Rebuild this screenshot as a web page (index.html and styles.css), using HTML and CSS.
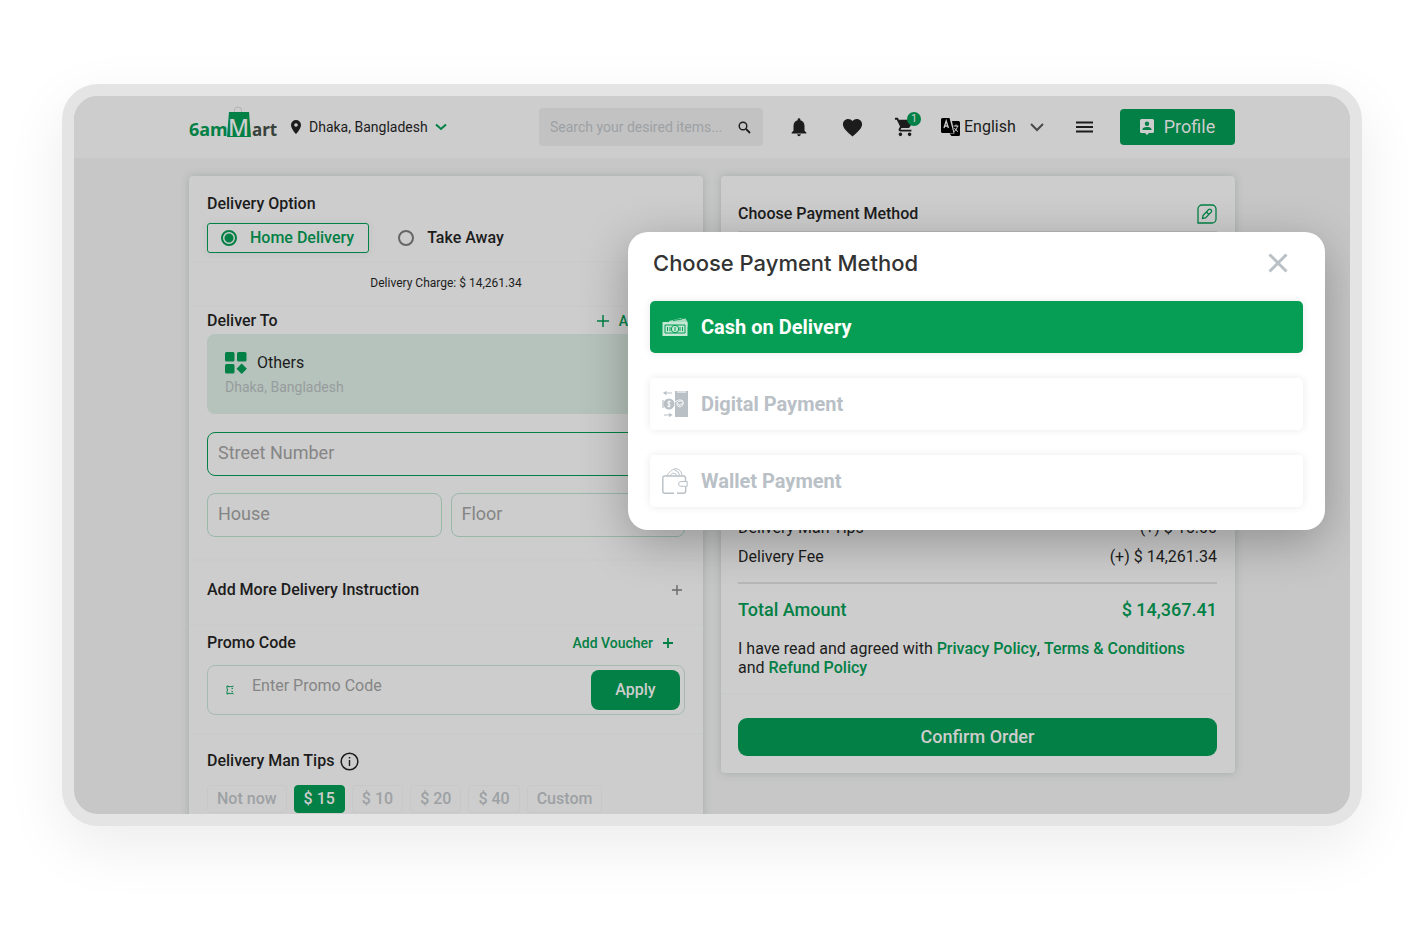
FILE: index.html
```html
<!DOCTYPE html>
<html lang="en">
<head>
<meta charset="utf-8">
<title>6amMart Checkout</title>
<link rel="stylesheet" href="styles.css">
</head>
<body>
<div class="frame">
  <header class="topbar">
    <div class="container topbar-row">
      <div class="brand">
        <svg class="logo" width="90" height="42" viewBox="0 0 90 42" role="img" aria-label="6amMart">
          <path d="M45.500 8V4.500a3.500 3.500 0 0 1 7 0V8" fill="none" stroke="#b0b0b0" stroke-width="1"/>
          <path d="M40 6h20l2 25H38z" fill="#028045"/>
          <text class="logo-green" x="0" y="30">6am</text>
          <text class="logo-m" x="39" y="30">M</text>
          <text class="logo-dark" x="63" y="30">art</text>
        </svg>
        <button class="location" type="button">
          <svg width="12" height="16" viewBox="0 0 12 16"><path d="M6 1a5 5 0 0 0-5 5c0 3.800 5 9 5 9s5-5.200 5-9a5 5 0 0 0-5-5zm0 6.800a1.800 1.800 0 1 1 0-3.600 1.800 1.800 0 0 1 0 3.600z" fill="#1c1c1c"/></svg>
          <span>Dhaka, Bangladesh</span>
          <svg width="12" height="8" viewBox="0 0 12 8"><path d="M1 1.500l5 4.500 5-4.500" fill="none" stroke="#028045" stroke-width="2"/></svg>
        </button>
      </div>
      <div class="search">
        <input type="search" aria-label="Search items" placeholder="Search your desired items...">
        <svg width="13" height="13" viewBox="0 0 13 13"><circle cx="5" cy="5" r="3.800" fill="none" stroke="#1c1c1c" stroke-width="1.400"/><path d="M8 8l4 4" stroke="#1c1c1c" stroke-width="1.800"/></svg>
      </div>
      <nav class="shortcuts">
        <button class="icon-btn" type="button" aria-label="Notifications"><svg width="22" height="22" viewBox="0 0 24 24"><path d="M12 22c1.100 0 2-.9 2-2h-4c0 1.100.9 2 2 2zm6-6v-5c0-3.070-1.630-5.640-4.500-6.320V4a1.500 1.500 0 0 0-3 0v.68C7.640 5.360 6 7.920 6 11v5l-2 2v1h16v-1l-2-2z" fill="#1c1c1c"/></svg></button>
        <button class="icon-btn" type="button" aria-label="Wishlist"><svg width="23" height="23" viewBox="0 0 24 24"><path d="M12 21.350l-1.450-1.320C5.400 15.360 2 12.280 2 8.500 2 5.420 4.420 3 7.500 3c1.740 0 3.410.81 4.500 2.090C13.090 3.810 14.760 3 16.500 3 19.580 3 22 5.420 22 8.500c0 3.780-3.400 6.860-8.550 11.540L12 21.350z" fill="#1c1c1c"/></svg></button>
        <button class="icon-btn" type="button" aria-label="Cart"><svg width="22" height="22" viewBox="0 0 24 24"><path d="M7 18a2 2 0 1 0 0 4 2 2 0 0 0 0-4zM1 2v2h2l3.600 7.590-1.350 2.450C4.520 15.370 5.480 17 7 17h12v-2H7.420a.25.25 0 0 1-.25-.25l.03-.12.9-1.630h7.450c.75 0 1.410-.41 1.750-1.030L21.700 4H5.210L4.270 2H1zm16 16a2 2 0 1 0 0 4 2 2 0 0 0 0-4z" fill="#1c1c1c"/></svg><span class="badge">1</span></button>
      </nav>
      <label class="language">
        <svg width="19" height="18" viewBox="0 0 19 18"><path d="M1.500 0h7l4 15H1.500A1.500 1.500 0 0 1 0 13.500v-12A1.500 1.500 0 0 1 1.500 0z" fill="#000"/><path d="M11 3h6.500A1.500 1.500 0 0 1 19 4.500v12a1.500 1.500 0 0 1-1.500 1.500h-7l-2-2.500h5z" fill="#000"/><path d="M3 10l2.200-7 2.200 7M3.800 8h2.900" fill="none" stroke="#cdcdcd" stroke-width="1.300"/><path d="M12.500 8h5M15 6.500V8m-2 5.500c2-1 3-3 3.500-5.500M13.500 10c.8 1.500 2 3 3.500 3.500" fill="none" stroke="#cdcdcd"/></svg>
        <select aria-label="Language"><option>English</option></select>
        <svg width="14" height="9" viewBox="0 0 14 9"><path d="M1 1l6 6 6-6" fill="none" stroke="#4a4a4a" stroke-width="2"/></svg>
      </label>
      <button class="icon-btn" type="button" aria-label="Menu"><svg width="17" height="12" viewBox="0 0 17 12"><path d="M0 1.500h17M0 6h17M0 10.500h17" stroke="#1c1c1c" stroke-width="1.800"/></svg></button>
      <button class="profile" type="button">
        <svg width="14" height="16" viewBox="0 0 14 16"><path fill-rule="evenodd" d="M1.500 0h11A1.500 1.500 0 0 1 14 1.500v11a1.500 1.500 0 0 1-1.500 1.500H9l-2 2-2-2H1.500A1.500 1.500 0 0 1 0 12.500v-11A1.500 1.500 0 0 1 1.500 0zM7 2.500a2.200 2.200 0 1 0 0 4.400 2.200 2.200 0 0 0 0-4.400zM2.500 11h9v-.8C11.500 8.700 8.500 8 7 8s-4.500.7-4.500 2.200z" fill="#cdcdcd"/></svg>
        Profile
      </button>
    </div>
  </header>

  <main class="container columns">
    <form class="card">
      <section class="section section-option">
        <h2>Delivery Option</h2>
        <div class="choices">
          <label class="choice choice-on"><input type="radio" name="mode" checked> Home Delivery</label>
          <label class="choice"><input type="radio" name="mode"> Take Away</label>
        </div>
      </section>
      <section class="section section-charge">Delivery Charge: $ 14,261.34</section>
      <section class="section section-address">
        <div class="row">
          <h2>Deliver To</h2>
          <button class="link-btn add-address" type="button"><svg width="12" height="12" viewBox="0 0 12 12"><path d="M0 6h12M6 0v12" stroke="#028045" stroke-width="1.500"/></svg>Add New</button>
        </div>
        <div class="address">
          <div class="address-name">
            <svg width="22" height="22" viewBox="0 0 22 22" fill="#028045"><rect width="9.500" height="9.500" rx="1.500"/><rect x="12" width="9.500" height="9.500" rx="1.500"/><rect y="12" width="9.500" height="9.500" rx="1.500"/><path d="M16.700 11.500l5.200 5.200-5.200 5.200-5.200-5.200z"/></svg>
            Others
          </div>
          <div class="address-line">Dhaka, Bangladesh</div>
        </div>
        <input class="field field-active" type="text" aria-label="Street Number" placeholder="Street Number">
        <div class="field-pair">
          <input class="field" type="text" aria-label="House" placeholder="House">
          <input class="field" type="text" aria-label="Floor" placeholder="Floor">
        </div>
      </section>
      <section class="section section-note row">
        <h2>Add More Delivery Instruction</h2>
        <button class="link-btn" type="button" aria-label="Add instruction"><svg width="10" height="10" viewBox="0 0 10 10"><path d="M0 5h10M5 0v10" stroke="#6a6a6a" stroke-width="1.400"/></svg></button>
      </section>
      <section class="section section-promo">
        <div class="row">
          <h2>Promo Code</h2>
          <button class="link-btn voucher" type="button">Add Voucher<svg width="10" height="10" viewBox="0 0 10 10"><path d="M0 5h10M5 0v10" stroke="#028045" stroke-width="1.800"/></svg></button>
        </div>
        <div class="promo">
          <svg width="8" height="10" viewBox="0 0 8 10"><path d="M7.500 1L6 1.800 4.500 1.500 3 1.800 1 .8v2.700l.6 1.500L1 6.500v2.700l2-1 1.500.5L6 8.200l1.500.8M7 3.200l-1.500.6M5.500 6.300l1.500.6" fill="none" stroke="#028045"/></svg>
          <input type="text" aria-label="Promo code" placeholder="Enter Promo Code">
          <button type="button">Apply</button>
        </div>
      </section>
      <section class="section section-tips">
        <h2>Delivery Man Tips <svg width="19" height="19" viewBox="0 0 19 19"><circle cx="9.500" cy="9.500" r="8.300" fill="none" stroke="#1c1c1c" stroke-width="1.500"/><path d="M9.500 8v6M9.500 5v1.500" stroke="#1c1c1c" stroke-width="1.400"/></svg></h2>
        <div class="chips">
          <button type="button">Not now</button>
          <button type="button" class="chip-on">$ 15</button>
          <button type="button">$ 10</button>
          <button type="button">$ 20</button>
          <button type="button">$ 40</button>
          <button type="button">Custom</button>
        </div>
      </section>
    </form>

    <section class="card summary">
      <div class="summary-body">
        <div class="row summary-head">
          <h2>Choose Payment Method</h2>
          <button class="link-btn" type="button" aria-label="Edit payment method"><svg width="20" height="20" viewBox="0 0 20 20" fill="none" stroke="#028045" stroke-width="1.300"><path d="M1 19V5a4 4 0 0 1 4-4h10a4 4 0 0 1 4 4v10a4 4 0 0 1-4 4z"/><path d="M5.500 14.500l.5-3 5.700-6c1.500-1.200 3.700.8 2.700 2.400l-5.900 6zM9.500 8l2.500 2.700"/></svg></button>
        </div>
        <dl class="costs">
          <div class="row"><dt>Delivery Man Tips</dt><dd>(+) $ 15.00</dd></div>
          <div class="row"><dt>Delivery Fee</dt><dd>(+) $ 14,261.34</dd></div>
        </dl>
        <div class="row total"><span>Total Amount</span><span>$ 14,367.41</span></div>
        <p class="terms">I have read and agreed with <a href="#">Privacy Policy</a>, <a href="#">Terms &amp; Conditions</a> and <a href="#">Refund Policy</a></p>
      </div>
      <div class="summary-foot"><button class="confirm" type="button">Confirm Order</button></div>
    </section>
  </main>

  <div class="modal" role="dialog" aria-labelledby="modal-title">
    <div class="modal-head">
      <h1 id="modal-title">Choose Payment Method</h1>
      <button class="close" type="button" aria-label="Close"><svg width="20" height="20" viewBox="0 0 20 20"><path d="M1.500 1.500l17 17M18.500 1.500l-17 17" stroke="#b9c0c6" stroke-width="3"/></svg></button>
    </div>
    <div class="methods">
      <label class="method method-on">
        <input type="radio" name="method" checked>
        <svg width="26" height="26" viewBox="0 0 26 26"><path d="M7 7l12-3 1.500 1 3-.5 2 3.500v5H7z" fill="#a8dcc0"/><rect x=".5" y="8" width="25" height="14" fill="#c4e8d4"/><g fill="none" stroke="#059e54" stroke-width="1"><path d="M3 11h20v8H3zM11 6.500l9-1.500"/><circle cx="13" cy="15" r="3.700"/><path d="M5.500 13v4M8 13v4M18 13v4M20.500 13v4M13 13v4"/></g></svg>
        Cash on Delivery
      </label>
      <label class="method">
        <input type="radio" name="method">
        <svg width="26" height="26" viewBox="0 0 26 26"><path d="M13 0h13v26H13z" fill="#b9c0c6"/><path d="M15 1h9" stroke="#fff"/><circle cx="7" cy="13" r="5.500" fill="#b9c0c6"/><path d="M1 9v8M2 2h8M4.500.5L2 2l2.500 1.500M2 24h7M7 22.500L9.500 24 7 25.500" fill="none" stroke="#b9c0c6" stroke-width="1.200"/><path d="M8.800 10.800c-3-1.400-4.200 1.500-1.800 2.200s1.200 3.400-1.800 2.200M7 9.500v7M13 11c5-4 9-1.500 8 2s-6 4-6 0 5-2 6-4M16 13l2 1.500 3-3" fill="none" stroke="#fff"/></svg>
        Digital Payment
      </label>
      <label class="method">
        <input type="radio" name="method">
        <svg width="26" height="26" viewBox="0 0 26 26" fill="none" stroke="#b9c0c6" stroke-width="1.400"><path d="M23.500 13V10a2 2 0 0 0-2-2h-19A1.800 1.800 0 0 0 .8 10v13a2.200 2.200 0 0 0 2.200 2.200h9M15 25.200h6.500a2.200 2.200 0 0 0 2.200-2.200v-4.500"/><path d="M19 13.500h6.200v4.800H19a2.400 2.400 0 0 1 0-4.800zM5 7.500C8 3 11 .8 14 .8c3.500 0 5.500 3 6 6.500M8.500 7.500c1-2.500 4-3.500 6.500-.2M12 1.500l4 2.500 2 3.500" stroke-width="1"/></svg>
        Wallet Payment
      </label>
    </div>
  </div>
</div>
</body>
</html>
```
FILE: styles.css
```css
:root {
  --green: #028045;
  --ink: #1c1c1c;
  --surface: #cdcdcd;
  --page: #c7c7c7;
  --muted: #9da1a4;
}

* { box-sizing: border-box; }

body {
  margin: 0;
  padding: 84px 46px 126px 62px;
  min-height: 100vh;
  background: #fff;
  color: var(--ink);
  font: 16px/20px Roboto, sans-serif;
}

button, input, select { font: inherit; color: inherit; }
button { border: 0; padding: 0; background: none; }
svg { display: block; flex: none; }
h1, h2, p, dl, dd { margin: 0; }
h2 { font-size: 16px; line-height: 20px; font-weight: 500; }

.frame {
  position: relative;
  height: calc(100vh - 210px);
  border: 12px solid #e4e4e4;
  border-radius: 36px;
  background: var(--page);
  box-shadow: 0 20px 60px rgba(0, 0, 0, 0.08);
  overflow: hidden;
}

.container { width: 100%; max-width: 1046px; margin: 0 auto; }
.row { display: flex; align-items: center; justify-content: space-between; }

.topbar { background: var(--surface); }
.topbar-row { display: flex; align-items: center; gap: 24px; height: 62px; }
.brand { display: flex; align-items: center; flex: 1; gap: 11px; margin-right: -24px; }
.logo { font: 700 18px "Noto Sans", sans-serif; }
.logo-green { fill: var(--green); }
.logo-m { fill: var(--surface); font-size: 23px; font-weight: 500; }
.logo-dark { fill: #38423a; font-size: 17px; }
.location { display: flex; align-items: center; gap: 7px; font-size: 14px; }

.search {
  display: flex;
  align-items: center;
  width: 224px;
  height: 38px;
  padding: 0 12px 0 11px;
  border-radius: 4px;
  background: #c2c2c2;
}
.search input {
  flex: 1;
  min-width: 0;
  padding: 0;
  border: 0;
  background: none;
  font-size: 14px;
}
.search input::placeholder { color: var(--muted); opacity: 1; }

.shortcuts { display: flex; gap: 29px; }
.icon-btn {
  position: relative;
  display: flex;
  align-items: center;
  justify-content: center;
  width: 24px;
  height: 24px;
}
.badge {
  position: absolute;
  top: -3px;
  right: -4px;
  width: 14px;
  height: 14px;
  border-radius: 7px;
  background: var(--green);
  color: var(--surface);
  font-size: 11px;
  line-height: 14px;
}
.language { display: flex; align-items: center; gap: 4px; width: 107px; }
.language select {
  width: 62px;
  padding: 0;
  border: 0;
  background: none;
  appearance: none;
}
.profile {
  display: flex;
  align-items: center;
  justify-content: center;
  gap: 10px;
  width: 115px;
  height: 36px;
  border-radius: 4px;
  background: var(--green);
  color: var(--surface);
  font-size: 18px;
}

.columns {
  display: grid;
  grid-template-columns: 1fr 1fr;
  align-items: start;
  gap: 18px;
  padding-top: 18px;
}
.card {
  border-radius: 4px;
  background: var(--surface);
  box-shadow: 0 0 8px rgba(60, 90, 80, 0.25);
}
.section { padding: 0 18px; border-bottom: 2px solid #cacbcb; }
.section-option { padding-top: 18px; padding-bottom: 8px; }
.choices { display: flex; gap: 16px; margin-top: 9px; }
.choice {
  display: flex;
  align-items: center;
  gap: 13px;
  height: 30px;
  padding: 0 12px;
  border: 1px solid transparent;
  border-radius: 3px;
  font-weight: 500;
}
.choice-on {
  border-color: var(--green);
  color: var(--green);
  padding: 0 14px 0 13px;
  box-shadow: 0 0 8px rgba(0, 80, 50, 0.08);
}
.choice input {
  appearance: none;
  width: 16px;
  height: 16px;
  margin: 0;
  border: 2px solid #666;
  border-radius: 50%;
}
.choice input:checked {
  border-color: var(--green);
  background: radial-gradient(circle, var(--green) 4px, transparent 5px);
}
.section-charge {
  padding-top: 10px;
  padding-bottom: 12px;
  font-size: 12px;
  text-align: center;
}
.section-address { padding-top: 4px; padding-bottom: 22px; }
.link-btn { display: flex; align-items: center; gap: 10px; }
.add-address, .voucher { color: var(--green); font-size: 14px; font-weight: 500; }
.add-address { padding-right: 10px; }
.voucher { padding-right: 12px; }
.address {
  height: 80px;
  margin-top: 3px;
  padding: 18px;
  border-radius: 8px;
  background: #b6c3bc;
}
.address-name { display: flex; align-items: center; gap: 10px; }
.address-line { margin-top: 3px; color: #969c9c; font-size: 14px; line-height: 20px; }
.field {
  width: 100%;
  height: 44px;
  margin-top: 17px;
  padding: 0 10px 4px;
  border: 1px solid #98b8a8;
  border-radius: 8px;
  background: none;
  font-size: 18px;
}
.field::placeholder, .promo input::placeholder { color: #858585; opacity: 1; }
.field-active { margin-top: 18px; border-color: var(--green); }
.field-pair { display: grid; grid-template-columns: 1fr 1fr; gap: 9px; }
.section-note { height: 65px; padding-right: 21px; padding-bottom: 6px; }
.section-promo { padding-top: 7px; padding-bottom: 18px; }
.promo {
  display: flex;
  align-items: center;
  height: 50px;
  margin-top: 12px;
  padding: 4px 4px 4px 18px;
  border: 1px solid #a5bbb0;
  border-radius: 8px;
}
.promo input {
  flex: 1;
  min-width: 0;
  height: 40px;
  padding: 0 0 10px 18px;
  border: 0;
  background: none;
}
.promo button {
  width: 89px;
  height: 40px;
  border-radius: 8px;
  background: var(--green);
  color: var(--surface);
  font-weight: 500;
}
.section-tips { padding-top: 16px; padding-bottom: 24px; }
.section-tips h2 { display: flex; align-items: center; gap: 6px; }
.chips { display: flex; gap: 7px; margin-top: 14px; }
.chips button {
  height: 28px;
  padding: 0 9px;
  border: 1px solid #c7c9c9;
  border-radius: 4px;
  color: var(--muted);
  font-weight: 500;
}
.chips .chip-on { border-color: var(--green); background: var(--green); color: var(--surface); }

.summary-body { padding: 28px 18px 16px 17px; border-bottom: 2px solid #cacbcb; }
.summary-head { padding-bottom: 7px; border-bottom: 2px solid #bababa; }
.costs { display: grid; gap: 9px; padding: 285px 0 15px; border-bottom: 2px solid #b8b8b8; }
.total {
  margin-top: 16px;
  color: var(--green);
  font-size: 18px;
  font-weight: 500;
}
.terms { margin-top: 19px; padding-right: 20px; line-height: 19px; }
.terms a { color: var(--green); font-weight: 500; text-decoration: none; }
.summary-foot { padding: 23px 18px 17px 17px; }
.confirm {
  width: 100%;
  height: 38px;
  border-radius: 9px;
  background: var(--green);
  color: var(--surface);
  font-size: 18px;
  font-weight: 500;
}

.modal {
  position: absolute;
  top: 136px;
  right: 25px;
  width: 697px;
  padding: 16px 22px 23px;
  border-radius: 20px;
  background: #fff;
  box-shadow: 0 12px 48px rgba(0, 0, 0, 0.28);
}
.modal-head { display: flex; align-items: center; justify-content: space-between; padding: 0 15px 0 3px; }
.modal h1 { color: #333; font: 500 22px/30px Inter, sans-serif; }
.methods { display: grid; gap: 25px; margin-top: 23px; }
.method {
  display: flex;
  align-items: center;
  gap: 13px;
  height: 52px;
  padding: 0 12px;
  border-radius: 5px;
  box-shadow: 0 0 8px rgba(0, 0, 0, 0.09);
  color: #b9c0c6;
  font-size: 20px;
  font-weight: 700;
}
.method-on { background: #059e54; color: #fff; }
.method input { position: absolute; opacity: 0; }
```
